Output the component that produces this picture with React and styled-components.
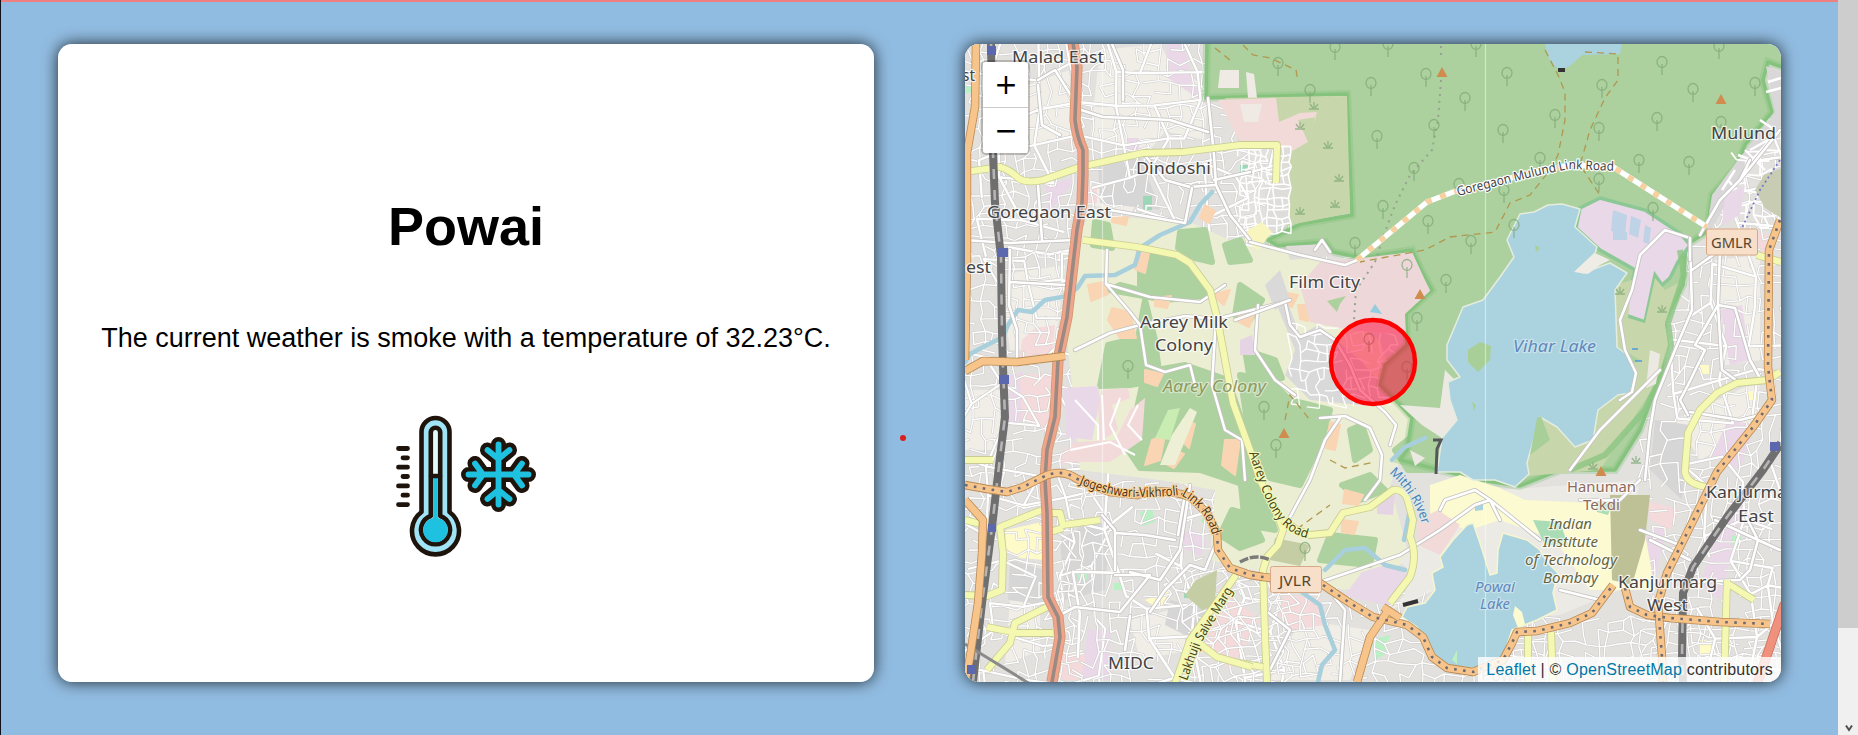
import React from "react";
import styled, { createGlobalStyle } from "styled-components";

const GlobalStyle = createGlobalStyle`
  * { box-sizing: border-box; }
  html, body { margin: 0; padding: 0; overflow: hidden; }
  body { font-family: "Liberation Sans", Arial, sans-serif; background: #91bce1; }
`;

const Page = styled.div`
  position: relative;
  display: flex;
  width: 100%;
  height: 735px;
`;
const Main = styled.main`
  flex: 1;
  display: flex;
  gap: 91px;
  padding: 44px 57px 53px;
  border-left: 1px solid #10131c;
  background: #91bce1;
  box-shadow: inset 0 2px 0 #f08080;
`;
const Card = styled.section`
  position: relative;
  flex: 1 1 0;
  height: 638px;
  border-radius: 14px;
  overflow: hidden;
  background: #fff;
`;
const CardFrame = styled.div`
  flex: 1 1 0;
  display: flex;
  height: 638px;
  border-radius: 14px;
  box-shadow: 0 0 16px rgba(0, 0, 0, 0.8);
`;
const Weather = styled(Card)`
  display: flex;
  flex-direction: column;
  align-items: center;
  padding-top: 151px;
`;
const Place = styled.h1`
  margin: 0;
  font-size: 54px;
  line-height: 62px;
  font-weight: 700;
  color: #000;
`;
const Summary = styled.p`
  margin: 66px 0 0;
  font-size: 27px;
  line-height: 31px;
  white-space: nowrap;
  color: #000;
`;
const WeatherIcon = styled.svg`
  display: block;
  width: 190px;
  height: 190px;
  margin: 36px 2px 0 0;
`;
const MapCanvas = styled.svg`
  display: block;
  width: 100%;
  height: 100%;
  text { font-family: "Noto Sans", sans-serif; }
`;
const Terrain = styled.g`
  filter: blur(0.5px);
`;
const ZoomControl = styled.div`
  position: absolute;
  top: 16px;
  left: 16px;
  border: 2px solid rgba(0, 0, 0, 0.2);
  border-radius: 5px;
  background-clip: padding-box;
`;
const ZoomButton = styled.button`
  display: flex;
  align-items: center;
  justify-content: center;
  width: 45px;
  height: ${(p) => (p.$first ? 46 : 45)}px;
  padding: 1px 0 0 1px;
  border: 0;
  border-bottom: ${(p) => (p.$first ? "1px solid #ccc" : "0")};
  border-radius: ${(p) => (p.$first ? "3px 3px 0 0" : "0 0 3px 3px")};
  background: #fff;
  color: #000;
  font: 28px/1 "DejaVu Sans", sans-serif;
`;
const Attribution = styled.div`
  position: absolute;
  right: 0;
  bottom: 0;
  height: 25px;
  padding: 0 8px;
  line-height: 25px;
  font-size: 16px;
  letter-spacing: 0.22px;
  white-space: nowrap;
  color: #333;
  background: rgba(255, 255, 255, 0.8);
`;
const Link = styled.a`color: #0078a8;`;
const Scrollbar = styled.div`
  display: flex;
  flex-direction: column;
  justify-content: space-between;
  align-items: center;
  width: 20px;
  background: #f0f0f0;
`;
const Thumb = styled.div`
  width: 20px;
  height: 628px;
  background: #cdcdcd;
`;
const Arrow = styled.svg`
  display: block;
  width: 8px;
  height: 8px;
  margin: 0 0 3px 2px;
`;
const Dot = styled.div`
  position: absolute;
  left: 900px;
  top: 435px;
  width: 6px;
  height: 6px;
  border-radius: 50%;
  background: #d8201f;
`;

/* ---------- weather icon ---------- */
const FLAKE =
  "M128.500 54.500V114.500M98.500 84.500H158.500M117.500 60L128.500 69L139.500 60M117.500 109L128.500 100L139.500 109M105 73.500L113 84.500L105 95.500M152 73.500L144 84.500L152 95.500";

function ThermometerIcon() {
  return (
    <WeatherIcon viewBox="0 0 190 190" fill="none" strokeLinecap="round" strokeLinejoin="round">
      <path
        d="M51.500 122V42a14 14 0 0 1 28 0V122a23.500 23.500 0 1 1 -28 0Z"
        fill="#a0e4f5" stroke="#1f140c" strokeWidth="4.600"
      />
      <path d="M60.800 126V42.500a4.700 4.700 0 0 1 9.400 0V126a14.500 14.500 0 1 1 -9.400 0Z" fill="#e3fafe" stroke="#1f140c" strokeWidth="4.600" />
      <path d="M63.100 86.500h4.800V128a12.300 12.300 0 1 1 -4.800 0Z" fill="#1fc1e0" />
      <path d="M61 86h9" stroke="#1f140c" strokeWidth="4.600" />
      <path d="M28.500 58.500H37.500M33 67.800H37.500M28.500 77.200H37.500M33 86.500H37.500M28.500 95.900H37.500M33 105.200H37.500M28.500 114.600H37.500" stroke="#1f140c" strokeWidth="4.800" />
      <path d={FLAKE} stroke="#1f140c" strokeWidth="15" />
      <path d={FLAKE} stroke="#1fc1e0" strokeWidth="5.800" />
    </WeatherIcon>
  );
}

/* ---------- street network ---------- */
function rng(seed) {
  let s = seed;
  return () => {
    s = (s * 16807) % 2147483647;
    return s / 2147483647;
  };
}

function streetMesh(x0, y0, x1, y1, step, seed, slant = 0, keep = 0.62) {
  const r = rng(seed);
  const cols = Math.ceil((x1 - x0) / step) + 1;
  const rows = Math.ceil((y1 - y0) / step) + 1;
  const pts = [];
  for (let j = 0; j < rows; j++) {
    for (let i = 0; i < cols; i++) {
      pts.push([
        x0 + i * step + (r() - 0.5) * step * 0.7 + slant * j * step,
        y0 + j * step + (r() - 0.5) * step * 0.7 - slant * i * step * 0.6,
      ]);
    }
  }
  const f = ([x, y]) => `${x.toFixed(1)} ${y.toFixed(1)}`;
  let d = "";
  for (let j = 0; j < rows; j++) {
    for (let i = 0; i < cols; i++) {
      const a = pts[j * cols + i];
      if (i < cols - 1 && r() < keep) d += `M${f(a)}L${f(pts[j * cols + i + 1])}`;
      if (j < rows - 1 && r() < keep) d += `M${f(a)}L${f(pts[(j + 1) * cols + i])}`;
    }
  }
  return d;
}

const MESHES = [
  { w: 1.4, d: streetMesh(960, 40, 1370, 260, 11, 11) },
  { w: 2.4, d: streetMesh(960, 40, 1370, 260, 37, 5, 0.1) },
  { w: 1.4, d: streetMesh(960, 255, 1075, 690, 11, 21) },
  { w: 2.2, d: streetMesh(960, 255, 1075, 690, 35, 8) },
  { w: 1.4, d: streetMesh(1060, 485, 1260, 690, 12, 31) },
  { w: 2.6, d: streetMesh(1060, 485, 1260, 690, 40, 9, 0.12) },
  { w: 1.5, d: streetMesh(1170, 580, 1270, 690, 13, 17, 0.4, 0.9) },
  { w: 1.4, d: streetMesh(1268, 580, 1540, 690, 12, 41) },
  { w: 1.4, d: streetMesh(1500, 620, 1790, 690, 12, 43) },
  { w: 1.4, d: streetMesh(1640, 130, 1790, 680, 12, 51) },
  { w: 2.4, d: streetMesh(1660, 130, 1790, 680, 36, 52, 0.1) },
];

const URBAN_PATCHES = [
  ["#f1eee8", "M1010 90L1070 70V140L1010 150ZM1100 50L1160 44L1190 100L1150 150L1090 140ZM1090 190L1150 180L1130 215L1092 205ZM1000 275L1065 265L1055 350H1010ZM965 390H1000V450H965ZM1170 60L1208 90L1205 140L1160 130ZM1010 600L1040 590V650L1005 665ZM1130 620L1170 610L1190 650L1140 660ZM1300 620L1370 630L1350 680H1270ZM1440 560L1390 610L1435 590ZM1715 260L1760 255V360L1725 365ZM1675 420L1760 380L1755 430L1700 460Z"],
  ["#d7d6d6", "M1098 165L1140 155L1160 210L1100 203ZM1090 520L1110 525L1105 590L1065 600L1060 540ZM1170 600L1215 610L1195 640L1165 625ZM1655 420L1690 425L1682 500L1650 470ZM1010 560L1045 570V605L1008 600ZM1280 280L1320 330L1350 400L1300 395L1270 340Z"],
  ["#ead8e8", "M1166 44H1184L1192 85L1206 92V104L1168 78ZM1127 138h12v12h-12ZM1045 185L1075 178L1060 200L1048 212ZM1010 375L1023 372L1022 425L1008 425ZM1183 533L1193 529L1208 542L1200 556L1182 548ZM1080 390L1100 386L1098 430L1072 440ZM1720 310L1742 305L1750 360L1730 365ZM1728 420L1755 425L1740 470L1712 455ZM1722 520L1745 500L1720 600L1700 585ZM1640 540L1668 520L1655 580L1638 577ZM1088 630L1110 630L1108 680H1080Z"],
  ["#f4dada", "M1085 185h12v18l-12 3ZM1022 340L1035 328L1055 325L1052 358H1020ZM1020 375L1060 372L1052 432L1022 420ZM1058 455L1075 442L1110 440L1118 460L1060 465ZM1068 140l13 -3l3 18l-10 -2ZM1060 650L1086 655L1080 680H1060ZM1215 490L1230 495L1225 530L1213 520ZM1225 590L1260 620L1230 670L1200 640ZM1285 595L1320 598L1325 625L1290 630L1275 610ZM1645 500L1680 510L1670 530L1650 520ZM1755 230l12 5v20l-12 -3Z"],
  ["#fffbc8", "M1006 530L1042 522L1045 560L1020 558L1005 548ZM1145 600L1170 590L1160 610ZM1248 230L1262 222L1272 232L1258 250L1245 240ZM1700 365h9v9h-9ZM1748 392l10 -2v10h-10ZM1700 640h14v16h-14Z"],
  ["#b9f0c4", "M1140 512l12 -4l3 14l-12 4ZM1078 573l9 -2v9l-9 -1ZM1114 583h7v7h-7ZM966 85h5v8h-5ZM1224 103L1238 115L1243 130L1228 120ZM1200 520l5 -3v8ZM1732 535l10 2l-3 10l-8 -2ZM1372 640L1390 635L1384 655L1374 660Z"],
  ["#9cd8b8", "M1143 196h9v14h-9ZM1184 590h8v8h-8ZM1533 520L1560 522L1558 540L1535 535ZM1240 165h8v10h-8Z"],
];

const FOREST_MAIN =
  "M1207 40L1206 98L1240 97L1347 94L1352 215L1300 224L1268 240L1278 246L1325 242L1333 252L1362 258L1412 250L1421 270L1432 290L1406 314L1407 345L1385 365L1380 385L1400 405L1412 418L1407 450L1400 460L1440 470L1480 480L1520 486L1560 470L1615 470L1640 430L1662 370L1665 320L1683 285L1686 245L1707 232L1712 195L1738 165L1745 145L1772 112L1763 80L1768 62L1790 70V40Z";

const AAREY =
  "M1088 215L1190 222L1240 245L1280 250L1330 262L1300 290L1380 340L1400 405L1415 425L1390 485L1410 560L1345 590L1262 572L1210 560L1215 490L1160 480L1080 470L1072 385L1066 330L1075 250Z";

const AAREY_GREEN = [
  "M1095 222L1108 225L1112 248L1093 245Z",
  "M1180 232L1205 230L1212 262L1195 258L1178 248Z",
  "M1140 253L1180 262L1212 295L1165 300L1140 285Z",
  "M1108 345L1138 338L1145 300L1155 340L1160 380L1130 385L1100 386Z",
  "M1145 372L1185 365L1228 380L1245 430L1265 470L1245 485L1200 470L1140 468L1128 450Z",
  "M1240 375L1270 380L1290 400L1330 410L1322 440L1300 485L1270 478L1250 440Z",
  "M1120 285L1140 290L1155 298L1110 290Z",
  "M1240 285L1262 300L1250 320L1235 315Z",
  "M1245 350L1275 360L1282 378L1250 380Z",
  "M1232 510L1250 515L1262 540L1240 548L1220 535Z",
  "M1240 475L1262 490L1275 530L1245 525Z",
  "M1330 535L1375 540L1370 565L1320 560Z",
  "M1342 485L1370 475L1385 490L1360 500Z",
  "M1350 430L1362 425L1370 450L1355 460Z",
  "M1400 355L1440 360L1445 410L1420 415L1400 395Z",
  "M1395 450L1420 430L1437 440L1432 470L1408 470Z",
  "M1225 245L1240 240L1250 260L1230 262Z",
];
const AAREY_ORANGE =
  "M1112 218L1128 217L1126 225L1112 222ZM1137 250l12 3l-4 20l-10 -4ZM1088 285l15 -3l5 12l-17 7ZM1112 308L1130 312L1136 338L1120 338L1108 320ZM1155 298l16 -2l-4 12l-12 -2ZM1145 370l18 4l-6 12l-12 -4ZM1212 295L1230 290L1224 305ZM1152 440L1165 435L1160 460L1145 465ZM1168 448l16 6l-10 14l-10 -5ZM1183 420l12 4l-6 24l-8 -8ZM1225 440L1240 440L1235 475L1222 465ZM1282 292l16 3l-6 12l-12 -4ZM1298 305h10v16l-8 -2ZM1330 422L1340 425L1335 450L1326 448ZM1345 490L1363 495L1358 505L1343 503ZM1342 520l16 2l-4 12l-12 -2ZM1205 205l10 6l-6 12l-9 -5ZM1240 312l14 3l-5 12l-12 -6Z";

const VIHAR =
  "M1520 214L1534 212L1548 205L1562 204L1580 209L1575 227L1597 247L1595 253L1577 270L1583 273L1610 263L1627 273L1615 290L1617 347L1630 357L1636 373L1630 393L1618 395L1598 410L1593 440L1575 447L1557 427L1540 417L1527 463L1529 474L1515 487L1495 480L1473 480L1460 472L1437 472L1442 438L1457 420L1450 400L1448 382L1460 377L1447 360L1447 345L1463 307L1483 300L1500 277L1514 257L1507 240Z";
const POWAI =
  "M1467 525L1453 540L1440 557L1443 567L1432 573L1435 590L1425 603L1407 607L1402 617L1417 627L1433 657L1453 667L1477 668L1503 657L1512 630L1527 624L1537 620L1557 610L1553 593L1558 573L1548 563L1540 550L1527 540L1503 533L1498 550L1497 573L1490 575L1480 543L1473 523Z";

const TREES = [
  [1335, 47], [1388, 44], [1476, 44], [1278, 63], [1371, 83], [1310, 90], [1426, 74], [1507, 73], [1465, 98], [1377, 136],
  [1434, 125], [1503, 130], [1414, 168], [1540, 158], [1383, 206], [1428, 221], [1355, 243], [1471, 241], [1514, 225], [1504, 190],
  [1459, 184], [1662, 62], [1719, 46], [1602, 85], [1693, 89], [1755, 83], [1555, 115], [1657, 118], [1721, 122], [1599, 128],
  [1639, 160], [1689, 162], [1599, 179], [1653, 208], [1407, 265], [1446, 280], [1417, 318], [1369, 339], [1407, 367],
  [1128, 366], [1264, 407], [1276, 445], [1305, 548],
];
const PEAKS = [[1442, 73], [1721, 100], [1420, 295], [1284, 434], [1601, 472]];
const SCRUB = [[1314, 107], [1328, 146], [1339, 179], [1335, 205], [1300, 212], [1300, 127], [1662, 310], [1620, 292], [1636, 461], [1593, 467]];

const SECONDARY = [
  "M965 172L1000 167Q1010 170 1017 177T1043 180L1080 167L1143 153L1183 152L1240 145L1277 145L1276 183",
  "M1083 240L1137 247L1177 255L1190 263L1210 290L1217 317L1233 403L1250 450L1260 480L1277 513L1283 530L1278 545L1267 557L1263 570L1265 637L1267 682",
  "M1240 663L1263 667",
  "M1283 520L1297 530L1310 535L1330 533L1343 513L1370 507L1393 490Q1403 489 1407 498L1413 520L1410 537Q1418 555 1410 577L1390 603",
  "M1236 575L1190 640L1175 684M1190 636L1217 657L1252 667",
  "M1047 508L1000 527L1003 553L1002 590L987 596L965 595M1050 513L1060 513L1063 525L1100 520M1050 532L1063 528",
  "M987 627L1017 633L1053 633M1047 607L1015 623L1010 643L987 670M965 520L985 525M965 460L993 460",
  "M1780 372L1767 380L1737 383L1717 393L1700 410L1688 433L1685 470Q1685 484 1707 487",
  "M1727 580L1724 682M1754 600L1727 583M1528 632V682M1551 632L1553 682",
  "M1757 255L1781 262",
];
const LOCAL = [
  "M1075 108L1103 117L1130 118L1170 120L1208 132M1112 44L1123 70V100M1038 80L1055 70L1080 110M1038 85L1042 125L1060 135M1143 153L1165 180L1190 187L1215 185M1208 98L1214 155L1216 185L1230 215L1250 240M1214 180L1250 172",
  "M1110 210L1185 223L1192 188M965 240L1010 243L1075 240M1038 185L1042 240",
  "M1010 250L1009 305L1017 330V360M1010 282L1065 285M1075 350L1110 333L1140 325L1185 316L1216 319L1285 302L1290 325L1300 337L1320 330L1335 340L1350 365L1360 390L1385 412L1396 425L1390 445",
  "M1107 250L1106 284L1130 312L1140 325L1146 365L1165 372L1190 365L1195 385M1106 284L1150 297L1200 302L1225 285M1258 305L1255 350L1275 380L1295 395",
  "M1216 317L1212 385L1225 430L1242 440L1245 480M1235 320L1290 300",
  "M1250 242L1300 255L1345 265L1362 258M1315 250L1322 240L1330 252",
  "M1320 418L1345 416L1370 428L1382 455L1380 480L1365 500M1340 418L1325 440L1310 480L1283 530",
  "M1102 515L1115 530L1115 570M1115 533L1145 535L1175 540M1178 535L1184 500M1190 485L1180 550L1160 580L1130 572M1115 575L1150 575L1120 612L1075 607L1060 615M1130 616L1125 650M1150 612L1165 590L1190 565L1205 570L1218 538",
  "M1320 582L1400 555L1440 530L1475 505L1490 500M1335 598L1345 610L1340 682M1490 500L1540 540M1440 510L1445 500L1475 490L1490 500L1500 520M1265 610L1290 630L1270 670",
  "M1640 255L1665 230L1690 238M1690 238L1692 310L1675 350L1655 400L1650 430L1645 480M1636 373L1632 392L1620 400M1640 255L1632 290L1620 320L1625 350L1636 373M1570 470L1600 430L1660 370M1692 270L1720 250L1718 305L1695 345M1718 305L1735 308L1750 360L1760 378M1718 305L1722 370L1740 383M1695 345L1705 350L1688 385L1680 400L1688 415",
  "M1690 412L1740 420L1760 415M1700 235L1720 200L1740 180L1780 130M1740 180L1750 160M1650 540L1690 560M1745 515L1758 540L1750 570L1740 580L1695 582M1715 520L1758 540L1780 550M1640 530L1680 545M1580 500L1620 500L1640 480M1560 590L1600 600M1690 238V260",
];
const PRIMARY = [
  "M976 43L975 107L967 153V260L965 360",
  "M965 371L983 361L1017 362L1065 356",
  "M965 500L983 520L982 553L978 603L970 657L965 682",
  "M965 485L987 489L1007 492L1023 487L1043 477Q1057 470 1070 475L1083 482L1110 492L1137 495Q1165 487 1190 497L1207 513L1217 533L1218 550L1230 568L1250 575L1263 577L1320 583L1350 603L1373 617L1407 625L1423 637L1432 657L1447 668L1473 672L1503 660L1512 643L1517 632L1537 631L1570 623L1592 613L1613 585",
  "M1625 588L1630 607L1647 615L1670 618L1720 622L1770 624",
  "M1780 220L1769 250L1768 367L1772 400L1753 427L1717 472L1687 533L1667 573L1658 603L1662 657L1663 682",
  "M1400 618L1383 607M1387 612L1370 637L1357 682",
];
const RAILS = [
  "M991 43L993 153L995 203L1001 257L1002 333L1003 367L1005 417L1000 457L992 527L982 603L973 682",
  "M1781 443L1763 470L1727 517L1693 567L1683 593L1682 657L1683 682",
];
const MOTORWAY =
  "M1073 43L1077 67L1075 120Q1077 137 1083 150V175L1082 203L1077 230L1067 317L1058 360L1055 417L1047 450L1045 480L1047 513L1048 597L1058 617L1060 637L1052 682";
const MOTORWAY_EAST = "M1784 605L1767 655L1757 684";
const GMLR = "M1357 260L1427 202L1453 192L1540 171L1570 165L1613 167L1707 227";

/* [text, left, baseline, width, size, kind] */
const LABELS = [
  ["Malad East", 1012, 62.500, 92, 17, "place"],
  ["st", 962, 81, 13, 17, "place"],
  ["Dindoshi", 1136, 174, 75, 17, "place"],
  ["Goregaon East", 987, 218, 124, 17, "place"],
  ["est", 966, 272.500, 25, 17, "place"],
  ["Aarey Milk", 1140, 328, 88, 17, "place"],
  ["Colony", 1155, 351, 58, 17, "place"],
  ["Aarey Colony", 1163, 392, 103, 16, "park"],
  ["Film City", 1289, 287.500, 71, 17, "place"],
  ["Vihar Lake", 1513, 351.500, 83, 16, "water"],
  ["Mulund", 1711, 139, 65, 17, "place"],
  ["Hanuman", 1567, 492, 69, 14.500, "peak"],
  ["Tekdi", 1583, 510, 37, 14.500, "peak"],
  ["Indian", 1549, 529, 43, 14.500, "campus"],
  ["Institute", 1543, 547, 55, 14.500, "campus"],
  ["of Technology", 1525, 565, 92, 14.500, "campus"],
  ["Bombay", 1543, 583, 55, 14.500, "campus"],
  ["Kanjurmarg", 1618, 588, 99, 17, "place"],
  ["West", 1647, 611, 41, 17, "place"],
  ["Kanjurmarg", 1706, 498, 99, 17, "place"],
  ["East", 1738, 522, 36, 17, "place"],
  ["Powai", 1475, 591.500, 40, 14.500, "water"],
  ["Lake", 1480, 609, 30, 14.500, "water"],
  ["MIDC", 1108, 669, 46, 17, "place"],
  ["Powai", 1481, 681, 46, 17, "faded"],
];
const LABEL_STYLE = {
  place: { fill: "#444", halo: 0.75, weight: 0.3 },
  faded: { fill: "#b4b4b4", halo: 0.5 },
  park: { fill: "#8f9a5c", halo: 0.45, italic: true, weight: 0.3 },
  water: { fill: "#6189bd", halo: 0.35, italic: true },
  peak: { fill: "#8f6a5a", halo: 0.7 },
  campus: { fill: "#65663f", halo: 0.7, italic: true, weight: 0.2 },
};

/* [id, text, path, length, size, fill, halo] */
const ROAD_LABELS = [
  ["rl-gmlr", "Goregaon Mulund Link Road", "M1458 196L1540 175L1570 169L1618 171", 159, 13, "#3f3f3f", "#fff"],
  ["rl-jvlr", "Jogeshwari-Vikhroli Link Road", "M1079 484Q1110 497 1137 497T1180 495Q1200 505 1209 525L1216 545", 156, 13.500, "#4b3417", "#fbd39a"],
  ["rl-aarey", "Aarey Colony Road", "M1249 453L1262 490Q1272 515 1284 526T1312 539", 108, 13, "#44441e", "#f3f8b5"],
  ["rl-mithi", "Mithi River", "M1389 473Q1415 495 1423 528", 62, 13, "#4d7fb4", "#dbe9e8"],
  ["rl-salve", "Lakhuji Salve Marg", "M1187 681L1200 645L1232 592", 102, 13, "#44441e", "#f3f8b5"],
];

function Stroked({ d, casing, color, width, cap = "round" }) {
  return (
    <g fill="none" strokeLinejoin="round" strokeLinecap={cap}>
      <path d={d} stroke={casing} strokeWidth={width + 1.6} />
      <path d={d} stroke={color} strokeWidth={width} />
    </g>
  );
}

function MapLabel({ item: [text, x, y, width, size, kind] }) {
  const s = LABEL_STYLE[kind];
  return (
    <text
      x={x} y={y} textLength={width} lengthAdjust="spacingAndGlyphs" fontSize={size}
      fontStyle={s.italic ? "italic" : "normal"} fill={s.fill}
      stroke="#fff" strokeOpacity={s.halo} strokeWidth="2.500" strokeLinejoin="round" paintOrder="stroke"
    >
      {text}
    </text>
  );
}

function Shield({ x, y, text, tx, width }) {
  return (
    <g>
      <rect x={x} y={y} width="51" height="26" rx="2" fill="#f7dfca" stroke="#d8a987" />
      <text x={tx} y={y + 19} textLength={width} lengthAdjust="spacingAndGlyphs" fontSize="14.500" fill="#57472f">{text}</text>
    </g>
  );
}

function StreetMap() {
  return (
    <MapCanvas viewBox="965 44 816 638" preserveAspectRatio="none">
      <rect x="965" y="44" width="816" height="638" fill="#e3e1de" />
      <Terrain>
        {URBAN_PATCHES.map(([c, d]) => <path key={c} d={d} fill={c} />)}
        {MESHES.map((m, i) => (
          <g key={i} fill="none" strokeLinecap="round">
            <path d={m.d} stroke="#cbc9c7" strokeWidth={m.w + 1} />
            <path d={m.d} stroke="#fff" strokeWidth={m.w} />
          </g>
        ))}

        {/* Aarey farmland and groves */}
        <path d={AAREY} fill="#eceed3" />
        {AAREY_GREEN.map((d, i) => <path key={i} d={d} fill="#aed1a0" stroke="#aed1a0" strokeWidth="6" strokeLinejoin="round" />)}
        <path d={AAREY_ORANGE} fill="#f9d5b4" stroke="#f9d5b4" strokeWidth="2" strokeLinejoin="round" />
        <path d="M1168 410L1180 408L1170 440L1155 438Z" fill="#c8ecb2" />
        <path d="M1190 408L1197 412L1175 465L1160 465L1172 435Z" fill="#eef0d5" />
        <path d="M1064 388L1098 386L1100 400L1092 440L1066 437Z" fill="#e9d8e8" />
        <path d="M1102 390L1128 388L1130 398L1112 405L1118 430L1100 442L1098 405ZM1130 410L1145 398L1142 440L1110 462L1060 462L1075 442L1115 440Z" fill="#f3dada" />
        <path d="M1240 340L1252 335L1255 355L1240 355ZM1377 500L1395 495L1393 515L1377 514Z" fill="#e5d5e4" />
        <path d="M1283 290L1300 335L1318 325L1360 360L1395 400L1360 405L1310 400L1285 375L1295 350L1275 300ZM1265 285L1280 270L1290 300L1275 310Z" fill="#dad9d9" />
        <path d="M1275 538L1310 545L1300 566L1270 560ZM1196 580L1217 570L1215 605L1202 610L1185 595Z" fill="#c4cda4" />
        <path d={streetMesh(1290, 325, 1395, 405, 9, 77)} stroke="#fff" strokeWidth="1.300" fill="none" />
        <path d="M1345 595L1362 572L1385 565L1408 575L1388 606Z" fill="#e9d8e8" />
        <path d="M1400 560L1440 530L1470 500L1500 490L1640 480L1620 590L1560 615L1490 620L1430 590L1400 605L1412 575Z" fill="#eceae4" />
        <path d="M1102 395L1104 440M1120 398L1110 425L1125 455M1138 405L1128 425L1142 440M1075 400L1098 425V440M1070 450L1110 442L1135 455" stroke="#fff" strokeWidth="2" fill="none" />

        {/* national park */}
        <path d={FOREST_MAIN} fill="#acd19e" stroke="#8cc683" strokeWidth="3.500" strokeLinejoin="round" />
        <path d={FOREST_MAIN} fill="none" stroke="#7cbd75" strokeOpacity="0.300" strokeWidth="8" />
        <path d="M1220 70H1239V88H1218ZM1246 72l8 2l3 24h-9Z" fill="#efeae4" />
        <path d="M1225 98L1347 96L1350 213L1285 226L1280 155L1277 145H1240Z" fill="#c8d7ab" />
        <path d="M1218 100L1276 98L1279 122L1300 113L1317 112L1312 128L1316 117L1298 120L1308 142L1285 155L1278 145L1240 142Z" fill="#f2dad9" />
        <path d="M1240 104h22l-4 18h-14Z" fill="#efeae4" />
        <path d="M1280 148h10V222l-25 14V185h13Z" fill="#deddda" />
        <path d={streetMesh(1240, 148, 1288, 230, 7, 91, 0, 0.85)} stroke="#fff" strokeWidth="1.500" fill="none" />
        <path d="M1248 230L1262 222L1272 232L1258 250L1245 240Z" fill="#f8f5bf" />
        <path d="M1286 246L1325 244L1333 256L1290 260Z" fill="#e0dcda" />
        <path d="M1320 262L1362 258L1412 252L1430 291L1405 314L1406 335L1350 330L1310 322L1300 285Z" fill="#eed7d8" />
        <path d="M1327 301L1346 296L1340 304L1337 312Z" fill="#acd19e" />
        <path d="M1370 312l5 -8l7 10Z" fill="#93cde0" />
        <path d="M1766 66L1781 72V130L1740 180L1705 240L1712 195L1738 160L1750 145L1775 112Z" fill="#d9d7d7" />
        <path d={streetMesh(1735, 150, 1784, 225, 11, 67, 0, 0.6)} stroke="#fff" strokeWidth="1.800" fill="none" />
        <path d="M1781 78L1768 82M1781 88L1766 92M1781 128L1752 160L1738 155M1768 140L1750 150M1760 120L1775 130M1745 150L1765 170M1735 170L1722 190M1728 180L1740 195" stroke="#fff" strokeWidth="2.400" fill="none" />
        <path d="M1764 175L1781 168V218L1765 208L1755 190Z" fill="#c8ccb2" />
        <path d="M1725 195L1745 185L1740 215L1722 225Z" fill="#e9d8e8" />

        {/* lake surroundings */}
        <path d="M1600 198L1645 210L1680 233L1690 245L1678 262L1670 278L1662 285L1655 275L1645 322L1625 315L1635 270L1600 250L1576 228L1580 208Z" fill="#e9d8e8" stroke="#8cc895" strokeWidth="3.500" />
        <path d="M1628 318L1645 323L1655 278L1665 290L1680 282L1665 325L1670 345L1655 385L1600 470L1527 476L1525 440L1540 410L1640 360L1615 345V285L1632 280Z" fill="#c8d7ab" />
        <path d="M1680 250L1684 275L1668 323L1671 345L1662 375L1645 410L1605 455L1570 470" fill="none" stroke="#8cc683" strokeWidth="6" strokeOpacity="0.800" />
        <path d="M1613 210l14 5l-2 20l-14 -4ZM1631 216l10 4l-3 18l-9 -4ZM1613 232h14v8h-14ZM1645 225l6 3l-2 16l-6 -2Z" fill="#bfd3e6" />
        <path d="M1445 370L1455 380L1450 400L1458 422L1445 440L1422 425L1400 405L1440 408L1443 385ZM1650 350l10 4l-4 30l-10 4ZM1410 450l15 8l-10 8Z" fill="#ece9e2" />
        <path d="M1430 485L1460 475L1500 488L1525 500L1640 505L1655 590L1590 590L1555 540L1500 520L1470 530L1430 520Z" fill="#fbfad0" />
        <path d="M1418 520L1438 510L1460 525L1440 555L1418 545Z" fill="#f2dad9" />
        <path d="M1533 520L1560 522L1568 545L1545 545ZM1595 500L1612 503L1608 515L1597 512Z" fill="#aadcb5" />
        <path d="M1610 495L1650 495L1645 540L1632 585L1612 580Z" fill="#bdc195" />
        <path d={VIHAR} fill="#aad3df" stroke="#e5ecdf" strokeWidth="1.500" strokeLinejoin="round" />
        <path d="M1468 350L1480 342L1491 346L1490 360L1478 372L1468 362ZM1472 402l4 3l-2 6ZM1535 245l5 3l-4 4ZM1537 418L1541 416L1550 440L1530 455Z" fill="#a9cf98" />
        <path d="M1595 253L1610 260L1600 265L1588 274L1574 272Z" fill="#efece6" />
        <path d={POWAI} fill="#aad3df" stroke="#f6f5cf" strokeWidth="1.500" strokeLinejoin="round" />
        <path d="M1515 606L1522 612L1525 624L1518 628L1513 615Z" fill="#fbfad0" />
        <path d="M1545 44H1622L1620 54L1582 55L1570 66L1560 70L1550 62Z" fill="#aad3df" />
        <path d="M1452 660l5 -10v14Z" fill="#b9f0c4" />
        <path d="M1475 503l8 -3v10l-8 1Z" fill="#aad3df" />

        {/* rivers */}
        <g fill="none" stroke="#a8cfdc" strokeWidth="4.500" strokeLinecap="round" strokeLinejoin="round">
          <path d="M1212 192L1200 205L1190 222L1160 235L1140 248L1135 265L1115 275L1085 276L1078 287L1068 296L1045 300L1032 312L1018 310L1008 325L1003 337L985 346L970 354L965 362" />
          <path d="M1425 438L1405 447L1392 460M1325 570L1345 550L1365 548L1385 565L1405 570M1303 593L1320 605L1325 625L1335 650L1322 665L1318 682M1410 510L1404 540" />
        </g>

        {/* footpaths */}
        <g fill="none" strokeWidth="1.300">
          <path d="M1243 45L1253 55L1270 58L1296 70L1298 82M1215 48L1230 60M1545 50L1558 75L1565 92V120L1558 155L1550 170L1530 195L1510 203L1495 232L1450 237L1425 250L1360 262M1585 52L1618 54V80L1605 98L1590 130L1580 165L1600 195M1297 529L1330 505M1285 420L1290 395L1310 420M1330 460L1345 468L1375 462" stroke="#b0984f" strokeDasharray="7 5" />
          <path d="M1441 46V60M1441 80L1438 120L1432 150L1410 175L1395 205L1385 232L1375 262L1356 290L1354 320" stroke="#98a290" strokeWidth="2" strokeDasharray="2 5" />
          <path d="M1780 160L1760 190L1742 228" stroke="#7779c8" strokeWidth="1.800" strokeDasharray="2 3" />
        </g>
        <path d="M1485.500 44V682M1102.500 44V682" stroke="#fff" strokeOpacity="0.450" strokeWidth="1.200" />

        {/* roads */}
        {LOCAL.map((d, i) => <Stroked key={i} d={d} casing="#c4c2c0" color="#fff" width={2.6} />)}
        {SECONDARY.map((d, i) => <Stroked key={i} d={d} casing="#c8cc94" color="#f4f8b0" width={6.2} cap="butt" />)}
        <Stroked d={MOTORWAY} casing="#cf9a70" color="#f0a48c" width={9.6} cap="butt" />
        <path d={MOTORWAY} fill="none" stroke="#9a8a82" strokeWidth="3.600" />
        <Stroked d={MOTORWAY_EAST} casing="#c7705c" color="#f0917e" width={8} />
        {RAILS.map((d, i) => (
          <g key={i} fill="none">
            <path d={d} stroke="#6f6f6f" strokeWidth="8" />
            <path d={d} stroke="#b5b5b5" strokeWidth="2.600" strokeDasharray="10 11" />
          </g>
        ))}
        <path d="M965 644L1030 684" stroke="#8a8a8a" strokeWidth="3" />
        {PRIMARY.map((d, i) => <Stroked key={i} d={d} casing="#b98b54" color="#f7c58b" width={6.8} cap="butt" />)}
        {PRIMARY.slice(3, 6).map((d, i) => (
          <path key={i} d={d} fill="none" stroke="#6e6a70" strokeWidth="2.600" strokeDasharray="2.600 6.400" />
        ))}
        <path d={GMLR} fill="none" stroke="#fff" strokeWidth="5.400" />
        <path d={GMLR} fill="none" stroke="#f8cf9f" strokeWidth="5.400" strokeDasharray="6 9" />
        <path d="M1240 562Q1255 553 1270 560" fill="none" stroke="#7b7b7b" strokeWidth="3.400" strokeDasharray="9 1.500" />
        <path d="M1433 440L1441 440L1437 449L1436 474" fill="none" stroke="#55555a" strokeWidth="3" />
        <path d="M1403 605L1418 601M1558 70H1565" stroke="#333" strokeWidth="4" />
        <path d="M1632 349H1638M1635 361H1642" stroke="#4b9ce0" strokeWidth="1.500" />
        <path d="M987 46h9v9h-9ZM998 248h10v9h-10ZM999 375h10v9h-10ZM988 524h8v8h-8ZM967 665h9v9h-9ZM1770 442h10v9h-10Z" fill="#5c68ae" />

        {/* symbols */}
        <g fill="none" stroke="#7fa876" strokeWidth="1.300" strokeOpacity="0.750">
          {TREES.map(([x, y], i) => (
            <path key={i} d={`M${x - 5} ${y}a5 5.500 0 1 0 10 0a5 5.500 0 1 0 -10 0M${x} ${y + 2}V${y + 13}`} />
          ))}
          {SCRUB.map(([x, y], i) => <path key={i} d={`M${x - 5} ${y + 2}h10M${x} ${y + 1}v-6M${x - 1} ${y + 1}l-3 -4M${x + 1} ${y + 1}l3 -4`} />)}
        </g>
        {PEAKS.map(([x, y], i) => <path key={i} d={`M${x} ${y - 6}l5.500 10h-11Z`} fill="#d08b4f" />)}
      </Terrain>

      {LABELS.map((item, i) => <MapLabel key={i} item={item} />)}
      {ROAD_LABELS.map(([id, text, d, length, size, fill, halo]) => (
        <g key={id}>
          <path id={id} d={d} fill="none" />
          <text fontSize={size} fill={fill} stroke={halo} strokeWidth="2.400" strokeLinejoin="round" paintOrder="stroke">
            <textPath href={`#${id}`} textLength={length} lengthAdjust="spacingAndGlyphs">{text}</textPath>
          </text>
        </g>
      ))}
      <Shield x={1706.500} y={229} text="GMLR" tx={1711} width={41} />
      <Shield x={1270.500} y={566.500} text="JVLR" tx={1279} width={32} />

      <circle cx="1373" cy="362" r="42" fill="#ff0033" fillOpacity="0.500" stroke="#f00" strokeWidth="4.400" />
    </MapCanvas>
  );
}

export default function App() {
  return (
    <Page>
      <GlobalStyle />
      <Main>
        <CardFrame>
          <Weather>
            <Place>Powai</Place>
            <Summary>The current weather is smoke with a temperature of 32.23°C.</Summary>
            <ThermometerIcon />
          </Weather>
        </CardFrame>
        <CardFrame>
          <Card>
            <StreetMap />
            <ZoomControl>
              <ZoomButton $first>+</ZoomButton>
              <ZoomButton>−</ZoomButton>
            </ZoomControl>
            <Attribution>
              <Link>Leaflet</Link> | © <Link>OpenStreetMap</Link> contributors
            </Attribution>
          </Card>
        </CardFrame>
      </Main>
      <Scrollbar>
        <Thumb />
        <Arrow viewBox="0 0 8 8">
          <path d="M1 1.500L4 6L7 1.500" fill="none" stroke="#505050" strokeWidth="2" />
        </Arrow>
      </Scrollbar>
      <Dot />
    </Page>
  );
}
